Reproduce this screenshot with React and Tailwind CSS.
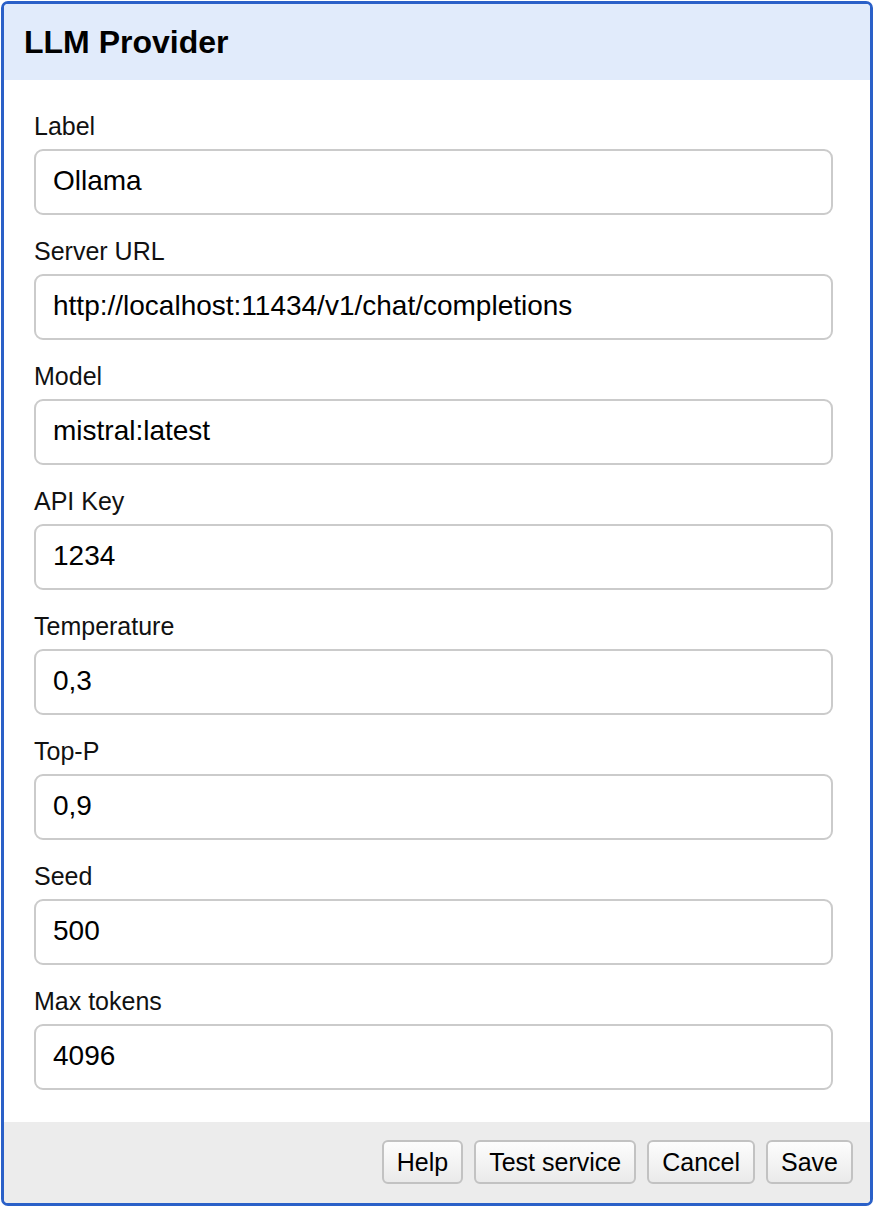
const fields = [
	{ label: "Label", value: "Ollama" },
	{ label: "Server URL", value: "http://localhost:11434/v1/chat/completions" },
	{ label: "Model", value: "mistral:latest" },
	{ label: "API Key", value: "1234" },
	{ label: "Temperature", value: "0,3" },
	{ label: "Top-P", value: "0,9" },
	{ label: "Seed", value: "500" },
	{ label: "Max tokens", value: "4096" },
];

const buttons = ["Help", "Test service", "Cancel", "Save"];

const App = () => {
	return (
		<div className="bg-white w-[874px] h-[1208px] pt-px pl-px font-['Liberation_Sans',Arial,sans-serif]">
			<div className="w-[872px] h-[1205px] border-[3px] border-[#2a60c8] rounded-[7px] overflow-hidden flex flex-col bg-white">
				{/* Header */}
				<div className="h-[76px] shrink-0 bg-[#e1ebfb] flex items-center pl-[20px]">
					<h1 className="text-[32px] font-bold text-black leading-none">LLM Provider</h1>
				</div>

				{/* Form body */}
				<div className="grow flex flex-col gap-[21px] pt-[31px] pb-[31px] pl-[30px]">
					{fields.map((field) => (
						<div key={field.label} className="flex flex-col gap-[8px]">
							<label className="text-[25px] leading-[30px] text-[#111]">{field.label}</label>
							<input
								type="text"
								defaultValue={field.value}
								className="w-[799px] h-[66px] border-2 border-[#cbcbcb] rounded-[9px] px-[17px] pb-[3px] text-[28px] text-black bg-white outline-none"
							/>
						</div>
					))}
				</div>

				{/* Footer */}
				<div className="h-[81px] shrink-0 bg-[#ececec] flex justify-end items-start pt-[18px] pr-[17px] gap-[11px]">
					{buttons.map((b) => (
						<button
							key={b}
							className="h-[44px] px-[13px] border-2 border-[#c2c2c2] rounded-[6px] bg-gradient-to-b from-[#fdfdfd] to-[#eaeaea] text-[25px] leading-none text-black"
						>
							{b}
						</button>
					))}
				</div>
			</div>
		</div>
	);
};

export default App;
